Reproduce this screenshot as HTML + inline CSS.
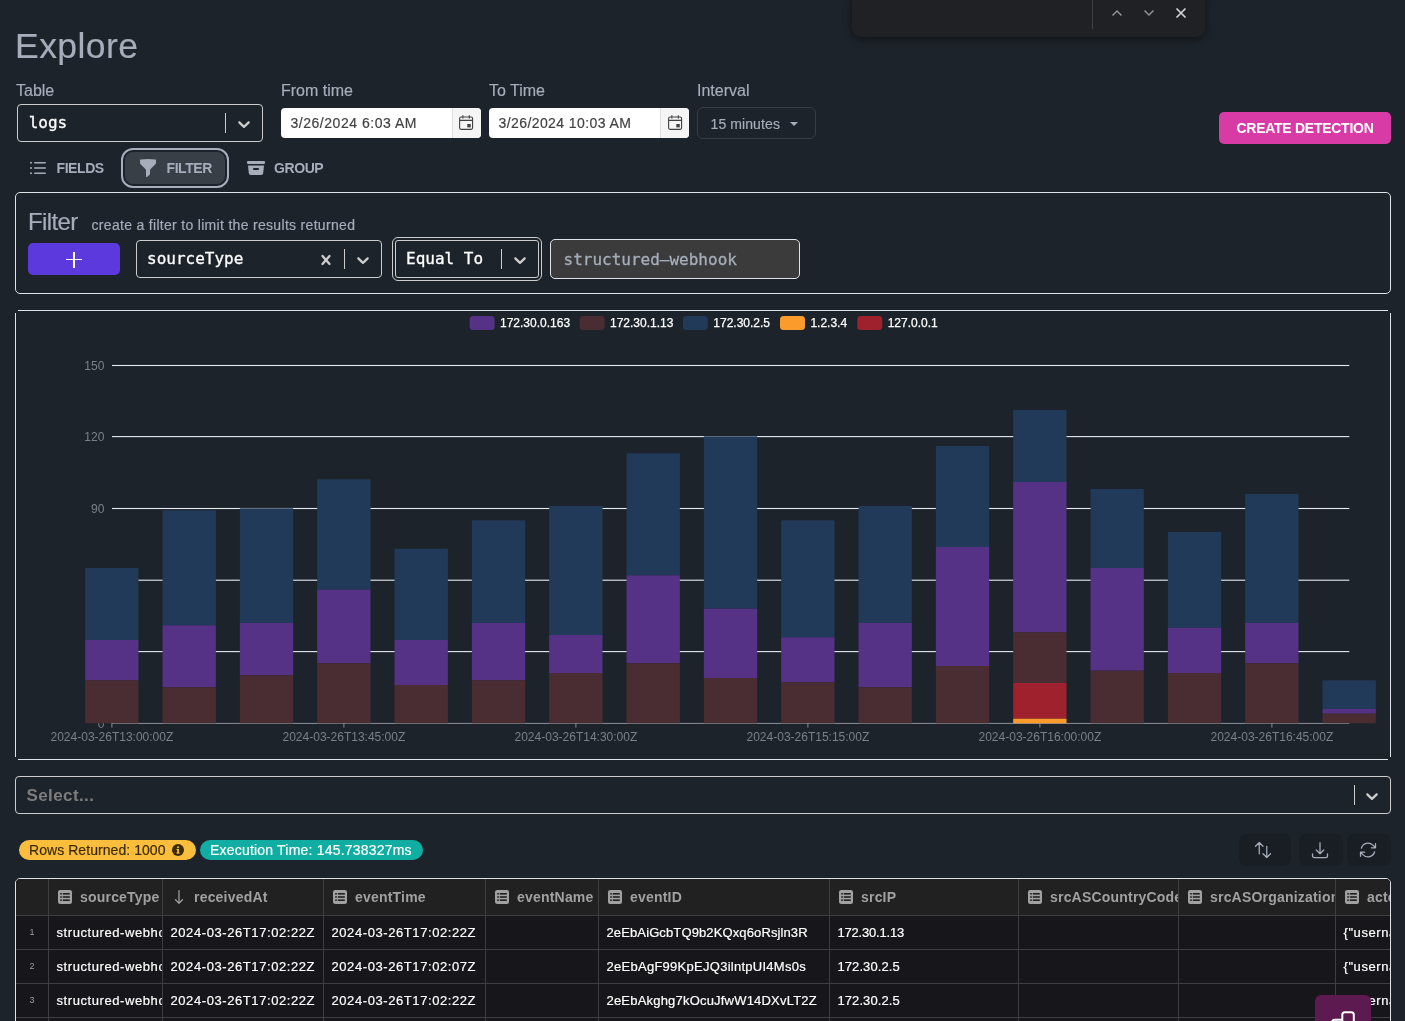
<!DOCTYPE html>
<html lang="en">
<head>
<meta charset="utf-8">
<title>Explore</title>
<style>
*{box-sizing:border-box}
html,body{margin:0;padding:0}
body{width:1405px;height:1021px;overflow:hidden;position:relative;background:#1d232a;color:#a6adbb;font-family:"Liberation Sans",Arial,sans-serif;font-size:16px;line-height:1}
.abs{position:absolute}
.lbl,h1,.fp .t,.fp .s,.badge span,.ddb span,.dt .v{-webkit-text-stroke:.18px currentColor}
.mono{font-family:"DejaVu Sans Mono","Liberation Mono",monospace;-webkit-text-stroke:.3px currentColor}
/* find bar */
.find{left:852px;top:-4px;width:353px;height:40.5px;background:#202124;border-radius:0 0 9px 9px;box-shadow:0 2px 9px rgba(0,0,0,.45)}
.find .sep{position:absolute;left:240px;top:0;width:1px;height:32.5px;background:#3f4145}
.find svg{position:absolute}
h1{margin:0;font-weight:400;font-size:35.5px;left:15px;top:25.9px;line-height:40px;white-space:nowrap;letter-spacing:.45px}
.lbl{font-size:16px;line-height:20px;top:80.5px;white-space:nowrap}
/* react-select look */
.rs{border:1px solid #cdcdcd;border-radius:4px;background:#1d232a;color:#fff}
.rs .val{position:absolute;left:10px;top:0;line-height:36px;font-size:16px;white-space:nowrap}
.rs .sep{position:absolute;top:8px;bottom:8px;width:1px;background:#cdcdcd}
.rs svg{position:absolute}
/* kendo date */
.dt{top:108px;width:200px;height:30px;background:#fff;border-radius:4px;overflow:hidden;color:#424242;font-size:14px}
.dt .v{position:absolute;left:9.5px;top:0;line-height:30.5px;white-space:nowrap;letter-spacing:.41px}
.dt .b{position:absolute;right:0;top:0;width:29px;height:30px;background:#f5f5f5;border-left:1px solid #dedede}
.dt .b svg{position:absolute;left:5px;top:5.6px;width:16.2px;height:17px}
.ddb{left:697px;top:107px;width:119px;height:32px;border:1px solid #363d46;border-radius:6px;font-size:14px;color:#a6adbb}
.ddb span{position:absolute;left:12.5px;top:0;line-height:33px;white-space:nowrap;letter-spacing:.1px}
.ddb i{position:absolute;left:92.3px;top:14px;width:0;height:0;border-left:4px solid transparent;border-right:4px solid transparent;border-top:4.5px solid #a6adbb}
.cd{left:1219px;top:112px;width:172px;height:32px;border-radius:5px;background:#d83ba6;color:#fff;font-weight:700;font-size:14px;line-height:32px;text-align:center;white-space:nowrap;letter-spacing:-.27px}
/* tabs */
.tab{top:152px;height:32px;border-radius:8px;font-weight:700;font-size:14px;line-height:32px;color:#a6adbb;white-space:nowrap;letter-spacing:-.42px}
.tab svg{position:absolute}
.tab span{position:absolute;top:0}
.tab.on{background:#383f47;outline:2px solid #a6adbb;outline-offset:2px}
/* panels */
.panel{border:1px solid #dfe2e7;border-radius:5px}
.fp{left:15px;top:192px;width:1376px;height:102px}
.fp .t{position:absolute;left:12px;top:13px;font-size:24px;line-height:32px;letter-spacing:-.6px;white-space:nowrap}
.fp .s{position:absolute;left:75.5px;top:22px;font-size:14px;line-height:20px;white-space:nowrap;letter-spacing:.31px}
.plus{left:28px;top:243px;width:92px;height:32px;border-radius:5px;background:#5b39dc}
.plus:before,.plus:after{content:"";position:absolute;background:#fff}
.plus:before{left:38px;top:16px;width:16px;height:1.3px}
.plus:after{left:45.4px;top:8.6px;width:1.3px;height:16px}
.inp{left:550px;top:239px;width:250px;height:40px;border:1px solid #dfe2e7;border-radius:5px;background:#3b3b3b;color:#a6adbb;font-size:16px;line-height:39.5px;padding-left:12.5px;white-space:nowrap}
.cp{left:15px;top:310px;width:1376px;height:450px;border:0}
.cp .ln{position:absolute;background:#dfe2e7}
.cp .chart{position:absolute;left:1px;top:1px}
.sel2{left:15px;top:776px;width:1376px;height:38px}
.sel2 .ph{position:absolute;left:10.5px;top:0;line-height:38px;font-size:17px;font-weight:700;color:#7d7d7d;white-space:nowrap;letter-spacing:.4px}
.badge{top:840px;height:20px;border-radius:10px;font-size:14px;line-height:20px;white-space:nowrap}
.b1{left:19px;width:177px;background:#fbbd3c;color:#3a2a06}
.b1 span{position:absolute;left:10px;top:0;letter-spacing:.06px}
.b1 svg{position:absolute;left:153px;top:4px}
.b2{left:200px;width:223px;background:#10ada3;color:#fff}
.b2 span{position:absolute;left:10px;top:0;letter-spacing:.2px}
.ib{top:834px;height:32px;border-radius:8px;background:#191e24}
.ib svg{position:absolute;top:6px}
/* grid */
.gw{left:15px;top:878px;width:1376px;height:160px;border:1px solid #dfe2e7;border-radius:5px;overflow:hidden;background:#16161b}
.grid{position:absolute;left:0;top:0;width:1374px;height:200px;font-size:13px}
.hc{position:absolute;top:0;height:37px;background:#212121;border-right:1px solid #3e3e42;border-bottom:1px solid #3e3e42;overflow:hidden;color:#a1a1a1;font-weight:700;font-size:14px;white-space:nowrap}
.hc .hic{position:absolute;left:8px;top:10px}
.hc .har{position:absolute;left:11px;top:10px}
.hc .ht{position:absolute;top:0;line-height:37px;letter-spacing:.2px}
.rc{position:absolute;height:34px;border-right:1px solid #3e3e42;border-bottom:1px solid #3e3e42;overflow:hidden;color:#fff;white-space:nowrap;background:#16161b}
.rc span{position:absolute;left:7.5px;top:0;line-height:33px;letter-spacing:.58px;-webkit-text-stroke:.2px currentColor}
.rc.num{color:#9d9da1;font-size:9px;text-align:center}
.rc.num span{position:static;line-height:33px;letter-spacing:0;-webkit-text-stroke:0}
.pw{left:1315px;top:995px;width:56px;height:40px;border-radius:6px 6px 0 0;background:#5d1a50}
</style>
</head>
<body>
<div id="root" style="position:absolute;left:0;top:0;width:1405px;height:1021px;will-change:transform">

<!-- browser find bar -->
<div class="abs find">
  <div class="sep"></div>
  <svg style="left:258px;top:12px" width="14" height="10" viewBox="0 0 14 10"><path d="M2.5 7.5 7 3l4.5 4.5" fill="none" stroke="#8e9196" stroke-width="1.5"/></svg>
  <svg style="left:290px;top:12px" width="14" height="10" viewBox="0 0 14 10"><path d="M2.5 2.5 7 7l4.5-4.5" fill="none" stroke="#8e9196" stroke-width="1.5"/></svg>
  <svg style="left:323px;top:11px" width="12" height="12" viewBox="0 0 12 12"><path d="M1.5 1.5l9 9M10.5 1.5l-9 9" fill="none" stroke="#d0d2d6" stroke-width="1.7"/></svg>
</div>

<h1 class="abs">Explore</h1>

<div class="abs lbl" style="left:16px">Table</div>
<div class="abs lbl" style="left:281px">From time</div>
<div class="abs lbl" style="left:489px">To Time</div>
<div class="abs lbl" style="left:697px">Interval</div>

<div class="abs rs" style="left:17px;top:104px;width:246px;height:38px">
  <div class="val mono" style="left:10.700px">logs</div>
  <div class="sep" style="left:206.5px"></div>
  <svg style="left:216px;top:9px" width="20" height="20" viewBox="0 0 20 20"><path d="M4.516 7.548c.436-.446 1.043-.481 1.576 0L10 11.295l3.908-3.747c.533-.481 1.141-.446 1.574 0 .436.445.408 1.197 0 1.615-.406.418-4.695 4.502-4.695 4.502a1.095 1.095 0 0 1-1.576 0S4.924 9.581 4.516 9.163c-.409-.418-.436-1.170 0-1.615z" fill="#cdcdcd"/></svg>
</div>

<div class="abs dt" style="left:281px"><div class="v" style="letter-spacing:.53px">3/26/2024 6:03 AM</div><div class="b"><svg width="16" height="16" viewBox="0 0 16 16" preserveAspectRatio="none"><rect x="1.6" y="2.8" width="12.8" height="11.6" rx="1.4" fill="none" stroke="#424242" stroke-width="1.1"/><path d="M1.6 6h12.800M4.800 1.200v3M11.200 1.200v3" stroke="#424242" stroke-width="1.1" fill="none"/><rect x="9.200" y="9.400" width="3.400" height="3.200" fill="#424242"/></svg></div></div>
<div class="abs dt" style="left:489px"><div class="v">3/26/2024 10:03 AM</div><div class="b"><svg style="left:6px" width="16" height="16" viewBox="0 0 16 16" preserveAspectRatio="none"><rect x="1.6" y="2.8" width="12.8" height="11.6" rx="1.4" fill="none" stroke="#424242" stroke-width="1.1"/><path d="M1.6 6h12.800M4.800 1.200v3M11.200 1.200v3" stroke="#424242" stroke-width="1.1" fill="none"/><rect x="9.200" y="9.400" width="3.400" height="3.200" fill="#424242"/></svg></div></div>

<div class="abs ddb"><span>15 minutes</span><i></i></div>

<div class="abs cd">CREATE DETECTION</div>

<!-- tabs -->
<div class="abs tab" style="left:18px;width:98px">
  <svg style="left:9.800px;top:6.100px" width="20" height="20" viewBox="0 0 20 20"><path fill="#a6adbb" d="M6 4.750A.75.750 0 016.750 4h10.500a.75.750 0 010 1.500H6.750A.75.750 0 016 4.750zM6 10a.75.750 0 01.75-.750h10.500a.75.750 0 010 1.500H6.750A.75.750 0 016 10zm0 5.250a.75.750 0 01.75-.750h10.500a.75.750 0 010 1.500H6.750a.75.750 0 01-.75-.750zM1.990 4.750a1 1 0 011-1H3a1 1 0 011 1v.010a1 1 0 01-1 1h-.010a1 1 0 01-1-1v-.010zM1.990 15.250a1 1 0 011-1H3a1 1 0 011 1v.010a1 1 0 01-1 1h-.010a1 1 0 01-1-1v-.010zM1.990 10a1 1 0 011-1H3a1 1 0 011 1v.010a1 1 0 01-1 1h-.010a1 1 0 01-1-1V10z"/></svg>
  <span style="left:38.500px">FIELDS</span>
</div>
<div class="abs tab on" style="left:125px;width:100px">
  <svg style="left:12.800px;top:5.900px" width="20" height="20" viewBox="0 0 20 20"><path fill="#a6adbb" fill-rule="evenodd" d="M2.628 1.601C5.028 1.206 7.490 1 10 1s4.973.206 7.372.601a.75.750 0 01.628.740v2.288a2.250 2.250 0 01-.659 1.590l-4.682 4.683a2.250 2.250 0 00-.659 1.590v3.037c0 .684-.310 1.330-.844 1.757l-1.937 1.550A.75.750 0 018 18.250v-5.757a2.250 2.250 0 00-.659-1.591L2.659 6.220A2.250 2.250 0 012 4.629V2.340a.75.750 0 01.628-.740z"/></svg>
  <span style="left:41.500px">FILTER</span>
</div>
<div class="abs tab" style="left:234px;width:101px">
  <svg style="left:12.200px;top:6px" width="20" height="20" viewBox="0 0 20 20"><path fill="#a6adbb" d="M2 3a1 1 0 00-1 1v1a1 1 0 001 1h16a1 1 0 001-1V4a1 1 0 00-1-1H2z"/><path fill="#a6adbb" fill-rule="evenodd" d="M2 7.500h16l-.811 7.710a2 2 0 01-1.990 1.790H4.802a2 2 0 01-1.990-1.790L2 7.500zM7 11a1 1 0 011-1h4a1 1 0 110 2H8a1 1 0 01-1-1z"/></svg>
  <span style="left:40px">GROUP</span>
</div>

<!-- filter panel -->
<div class="abs panel fp">
  <div class="t">Filter</div>
  <div class="s">create a filter to limit the results returned</div>
</div>
<div class="abs plus"></div>
<div class="abs rs" style="left:136px;top:240px;width:246px;height:38px">
  <div class="val mono">sourceType</div>
  <svg style="left:179px;top:9px" width="20" height="20" viewBox="0 0 20 20"><path d="M14.348 14.849a1.200 1.200 0 0 1-1.697 0L10 11.819l-2.651 3.029a1.200 1.200 0 1 1-1.697-1.697l2.758-3.150-2.759-3.152a1.200 1.200 0 1 1 1.697-1.697L10 8.183l2.651-3.031a1.200 1.200 0 1 1 1.697 1.697l-2.758 3.152 2.758 3.150a1.200 1.200 0 0 1 0 1.698z" fill="#cdcdcd"/></svg>
  <div class="sep" style="left:206.500px"></div>
  <svg style="left:216px;top:9px" width="20" height="20" viewBox="0 0 20 20"><path d="M4.516 7.548c.436-.446 1.043-.481 1.576 0L10 11.295l3.908-3.747c.533-.481 1.141-.446 1.574 0 .436.445.408 1.197 0 1.615-.406.418-4.695 4.502-4.695 4.502a1.095 1.095 0 0 1-1.576 0S4.924 9.581 4.516 9.163c-.409-.418-.436-1.170 0-1.615z" fill="#cdcdcd"/></svg>
</div>
<div class="abs rs" style="left:395px;top:240px;width:144px;height:38px;outline:1px solid #cdcdcd;outline-offset:2px;border-radius:3px">
  <div class="val mono">Equal To</div>
  <div class="sep" style="left:104.500px"></div>
  <svg style="left:114px;top:9px" width="20" height="20" viewBox="0 0 20 20"><path d="M4.516 7.548c.436-.446 1.043-.481 1.576 0L10 11.295l3.908-3.747c.533-.481 1.141-.446 1.574 0 .436.445.408 1.197 0 1.615-.406.418-4.695 4.502-4.695 4.502a1.095 1.095 0 0 1-1.576 0S4.924 9.581 4.516 9.163c-.409-.418-.436-1.170 0-1.615z" fill="#cdcdcd"/></svg>
</div>
<div class="abs inp mono">structured&#8211;webhook</div>

<!-- chart panel -->
<div class="abs panel cp">
<div class="ln" style="left:3px;top:0;width:1370px;height:1px"></div><div class="ln" style="left:3px;top:449px;width:1370px;height:1px"></div><div class="ln" style="left:0;top:3px;width:1px;height:444px"></div><div class="ln" style="left:1375px;top:3px;width:1px;height:444px"></div>
<svg class="chart" width="1374" height="448" viewBox="0 0 1374 448" font-family="Liberation Sans, Arial, sans-serif">
<rect x="453.6" y="5" width="25" height="14" rx="3.5" fill="#553285"/>
<text x="484.0" y="16.2" font-size="12" fill="#ffffff" stroke="#ffffff" stroke-width="0.25">172.30.0.163</text>
<rect x="563.6" y="5" width="25" height="14" rx="3.5" fill="#4a2d33"/>
<text x="594.0" y="16.2" font-size="12" fill="#ffffff" stroke="#ffffff" stroke-width="0.25">172.30.1.13</text>
<rect x="666.9" y="5" width="25" height="14" rx="3.5" fill="#213a59"/>
<text x="697.3" y="16.2" font-size="12" fill="#ffffff" stroke="#ffffff" stroke-width="0.25">172.30.2.5</text>
<rect x="764" y="5" width="25" height="14" rx="3.5" fill="#fb9b2b"/>
<text x="794.4" y="16.2" font-size="12" fill="#ffffff" stroke="#ffffff" stroke-width="0.25">1.2.3.4</text>
<rect x="841.3" y="5" width="25" height="14" rx="3.5" fill="#9f212d"/>
<text x="871.7" y="16.2" font-size="12" fill="#ffffff" stroke="#ffffff" stroke-width="0.25">127.0.0.1</text>
<rect x="96" y="53.95" width="1237.3" height="1.1" fill="#e6eaf0"/>
<text x="88.4" y="58.8" font-size="12" fill="#7c8088" text-anchor="end">150</text>
<rect x="96" y="125.05" width="1237.3" height="1.1" fill="#e6eaf0"/>
<text x="88.4" y="129.9" font-size="12" fill="#7c8088" text-anchor="end">120</text>
<rect x="96" y="196.95" width="1237.3" height="1.1" fill="#e6eaf0"/>
<text x="88.4" y="201.8" font-size="12" fill="#7c8088" text-anchor="end">90</text>
<rect x="96" y="268.65" width="1237.3" height="1.1" fill="#e6eaf0"/>
<text x="88.4" y="273.5" font-size="12" fill="#7c8088" text-anchor="end">60</text>
<rect x="96" y="340.05" width="1237.3" height="1.1" fill="#e6eaf0"/>
<text x="88.4" y="344.9" font-size="12" fill="#7c8088" text-anchor="end">30</text>
<text x="88.4" y="416.7" font-size="12" fill="#7c8088" text-anchor="end">0</text>
<rect x="96" y="411.9" width="1237.3" height="1" fill="#8b9099"/>
<rect x="69.19" y="257" width="53.33" height="72" fill="#213a59"/>
<rect x="69.19" y="329" width="53.33" height="40.3" fill="#553285"/>
<rect x="69.19" y="369.3" width="53.33" height="43.0" fill="#4a2d33"/>
<rect x="146.52" y="199.3" width="53.33" height="115.0" fill="#213a59"/>
<rect x="146.52" y="314.3" width="53.33" height="62.0" fill="#553285"/>
<rect x="146.52" y="376.3" width="53.33" height="36.0" fill="#4a2d33"/>
<rect x="223.85" y="197.3" width="53.33" height="114.7" fill="#213a59"/>
<rect x="223.85" y="312" width="53.33" height="52.3" fill="#553285"/>
<rect x="223.85" y="364.3" width="53.33" height="48.0" fill="#4a2d33"/>
<rect x="301.18" y="168.3" width="53.33" height="110.4" fill="#213a59"/>
<rect x="301.18" y="278.7" width="53.33" height="73.6" fill="#553285"/>
<rect x="301.18" y="352.3" width="53.33" height="60.0" fill="#4a2d33"/>
<rect x="378.52" y="237.7" width="53.33" height="91.3" fill="#213a59"/>
<rect x="378.52" y="329" width="53.33" height="45" fill="#553285"/>
<rect x="378.52" y="374" width="53.33" height="38.3" fill="#4a2d33"/>
<rect x="455.85" y="209.3" width="53.33" height="102.7" fill="#213a59"/>
<rect x="455.85" y="312" width="53.33" height="57.3" fill="#553285"/>
<rect x="455.85" y="369.3" width="53.33" height="43.0" fill="#4a2d33"/>
<rect x="533.18" y="195" width="53.33" height="129" fill="#213a59"/>
<rect x="533.18" y="324" width="53.33" height="38" fill="#553285"/>
<rect x="533.18" y="362" width="53.33" height="50.3" fill="#4a2d33"/>
<rect x="610.52" y="142.3" width="53.33" height="122.0" fill="#213a59"/>
<rect x="610.52" y="264.3" width="53.33" height="88.0" fill="#553285"/>
<rect x="610.52" y="352.3" width="53.33" height="60.0" fill="#4a2d33"/>
<rect x="687.85" y="125.3" width="53.33" height="172.4" fill="#213a59"/>
<rect x="687.85" y="297.7" width="53.33" height="69.3" fill="#553285"/>
<rect x="687.85" y="367" width="53.33" height="45.3" fill="#4a2d33"/>
<rect x="765.18" y="209.3" width="53.33" height="117.0" fill="#213a59"/>
<rect x="765.18" y="326.3" width="53.33" height="45.0" fill="#553285"/>
<rect x="765.18" y="371.3" width="53.33" height="41.0" fill="#4a2d33"/>
<rect x="842.51" y="195" width="53.33" height="117" fill="#213a59"/>
<rect x="842.51" y="312" width="53.33" height="64.3" fill="#553285"/>
<rect x="842.51" y="376.3" width="53.33" height="36.0" fill="#4a2d33"/>
<rect x="919.85" y="135" width="53.33" height="101" fill="#213a59"/>
<rect x="919.85" y="236" width="53.33" height="119" fill="#553285"/>
<rect x="919.85" y="355" width="53.33" height="57.3" fill="#4a2d33"/>
<rect x="997.18" y="99" width="53.33" height="72" fill="#213a59"/>
<rect x="997.18" y="171" width="53.33" height="150.3" fill="#553285"/>
<rect x="997.18" y="321.3" width="53.33" height="50.7" fill="#4a2d33"/>
<rect x="997.18" y="372" width="53.33" height="35.7" fill="#9f212d"/>
<rect x="997.18" y="407.7" width="53.33" height="4.6" fill="#fb9b2b"/>
<rect x="1074.51" y="178" width="53.33" height="79" fill="#213a59"/>
<rect x="1074.51" y="257" width="53.33" height="102.7" fill="#553285"/>
<rect x="1074.51" y="359.7" width="53.33" height="52.6" fill="#4a2d33"/>
<rect x="1151.85" y="221" width="53.33" height="95.7" fill="#213a59"/>
<rect x="1151.85" y="316.7" width="53.33" height="45.3" fill="#553285"/>
<rect x="1151.85" y="362" width="53.33" height="50.3" fill="#4a2d33"/>
<rect x="1229.18" y="183" width="53.33" height="129" fill="#213a59"/>
<rect x="1229.18" y="312" width="53.33" height="40.3" fill="#553285"/>
<rect x="1229.18" y="352.3" width="53.33" height="60.0" fill="#4a2d33"/>
<rect x="1306.51" y="369.3" width="53.33" height="28.7" fill="#213a59"/>
<rect x="1306.51" y="398" width="53.33" height="4.7" fill="#553285"/>
<rect x="1306.51" y="402.7" width="53.33" height="9.6" fill="#4a2d33"/>
<rect x="95.4" y="411.9" width="1" height="4.6" fill="#8b9099"/>
<text x="95.9" y="430" font-size="12" fill="#7c8088" text-anchor="middle">2024-03-26T13:00:00Z</text>
<rect x="327.4" y="411.9" width="1" height="4.6" fill="#8b9099"/>
<text x="327.9" y="430" font-size="12" fill="#7c8088" text-anchor="middle">2024-03-26T13:45:00Z</text>
<rect x="559.4" y="411.9" width="1" height="4.6" fill="#8b9099"/>
<text x="559.9" y="430" font-size="12" fill="#7c8088" text-anchor="middle">2024-03-26T14:30:00Z</text>
<rect x="791.4" y="411.9" width="1" height="4.6" fill="#8b9099"/>
<text x="791.9" y="430" font-size="12" fill="#7c8088" text-anchor="middle">2024-03-26T15:15:00Z</text>
<rect x="1023.4" y="411.9" width="1" height="4.6" fill="#8b9099"/>
<text x="1023.9" y="430" font-size="12" fill="#7c8088" text-anchor="middle">2024-03-26T16:00:00Z</text>
<rect x="1255.4" y="411.9" width="1" height="4.6" fill="#8b9099"/>
<text x="1255.9" y="430" font-size="12" fill="#7c8088" text-anchor="middle">2024-03-26T16:45:00Z</text>
</svg>
</div>

<!-- bottom select -->
<div class="abs rs sel2">
  <div class="ph">Select...</div>
  <div class="sep" style="left:1337.500px"></div>
  <svg style="left:1346px;top:9px" width="20" height="20" viewBox="0 0 20 20"><path d="M4.516 7.548c.436-.446 1.043-.481 1.576 0L10 11.295l3.908-3.747c.533-.481 1.141-.446 1.574 0 .436.445.408 1.197 0 1.615-.406.418-4.695 4.502-4.695 4.502a1.095 1.095 0 0 1-1.576 0S4.924 9.581 4.516 9.163c-.409-.418-.436-1.170 0-1.615z" fill="#cdcdcd"/></svg>
</div>

<div class="abs badge b1"><span>Rows Returned: 1000</span><svg width="12" height="12" viewBox="0 0 12 12"><circle cx="6" cy="6" r="6" fill="#3a2a06"/><rect x="5.200" y="5" width="1.700" height="4.300" fill="#fbbd3c"/><rect x="4.500" y="5" width="2.400" height="1" fill="#fbbd3c"/><rect x="4.400" y="8.500" width="3.300" height="1" fill="#fbbd3c"/><circle cx="6" cy="3.200" r="1" fill="#fbbd3c"/></svg></div>
<div class="abs badge b2"><span>Execution Time: 145.738327ms</span></div>

<div class="abs ib" style="left:1239px;width:52px"><svg style="left:14.200px" width="20" height="20" viewBox="0 0 24 24" fill="none" stroke="#a6adbb" stroke-width="1.5" stroke-linecap="round" stroke-linejoin="round"><path d="M3 7.500L7.500 3m0 0L12 7.500M7.500 3v13.500m13.500 0L16.500 21m0 0L12 16.500m4.500 4.500V7.500"/></svg></div>
<div class="abs ib" style="left:1299px;width:44px"><svg style="left:10.900px" width="20" height="20" viewBox="0 0 24 24" fill="none" stroke="#a6adbb" stroke-width="1.5" stroke-linecap="round" stroke-linejoin="round"><path d="M3 16.500v2.250A2.250 2.250 0 005.250 21h13.500A2.250 2.250 0 0021 18.750V16.500M16.500 12L12 16.500m0 0L7.500 12m4.500 4.500V3"/></svg></div>
<div class="abs ib" style="left:1347px;width:44px"><svg style="left:10.800px" width="20" height="20" viewBox="0 0 24 24" fill="none" stroke="#a6adbb" stroke-width="1.5" stroke-linecap="round" stroke-linejoin="round"><path d="M16.023 9.348h4.992v-.001M2.985 19.644v-4.992m0 0h4.992m-4.993 0l3.181 3.183a8.250 8.250 0 0013.803-3.700M4.031 9.865a8.250 8.250 0 0113.803-3.700l3.181 3.182m0-4.991v4.990"/></svg></div>

<!-- data grid -->
<div class="abs gw">
<div class="grid">
<div class="hc" style="left:0px;width:33px"></div>
<div class="hc" style="left:33px;width:114px"><svg class="hic" width="16" height="16" viewBox="0 0 16 16"><rect x="1" y="1" width="14" height="14" rx="2.2" fill="#a1a1a1"/><g fill="#212121"><rect x="3.2" y="4" width="1.6" height="1.6"/><rect x="5.8" y="4" width="7" height="1.6"/><rect x="3.2" y="7.2" width="1.6" height="1.6"/><rect x="5.8" y="7.2" width="7" height="1.6"/><rect x="3.2" y="10.4" width="1.6" height="1.6"/><rect x="5.8" y="10.4" width="7" height="1.6"/></g></svg><span class="ht" style="left:31px">sourceType</span></div>
<div class="hc" style="left:147px;width:161px"><svg class="har" width="10" height="16" viewBox="0 0 10 16"><path d="M5 1.500v12.800M1.500 10.700 5 14.400l3.500-3.700" fill="none" stroke="#a1a1a1" stroke-width="1.250" stroke-linecap="round" stroke-linejoin="round"/></svg><span class="ht" style="left:31px">receivedAt</span></div>
<div class="hc" style="left:308px;width:162px"><svg class="hic" width="16" height="16" viewBox="0 0 16 16"><rect x="1" y="1" width="14" height="14" rx="2.2" fill="#a1a1a1"/><g fill="#212121"><rect x="3.2" y="4" width="1.6" height="1.6"/><rect x="5.8" y="4" width="7" height="1.6"/><rect x="3.2" y="7.2" width="1.6" height="1.6"/><rect x="5.8" y="7.2" width="7" height="1.6"/><rect x="3.2" y="10.4" width="1.6" height="1.6"/><rect x="5.8" y="10.4" width="7" height="1.6"/></g></svg><span class="ht" style="left:31px">eventTime</span></div>
<div class="hc" style="left:470px;width:113px"><svg class="hic" width="16" height="16" viewBox="0 0 16 16"><rect x="1" y="1" width="14" height="14" rx="2.2" fill="#a1a1a1"/><g fill="#212121"><rect x="3.2" y="4" width="1.6" height="1.6"/><rect x="5.8" y="4" width="7" height="1.6"/><rect x="3.2" y="7.2" width="1.6" height="1.6"/><rect x="5.8" y="7.2" width="7" height="1.6"/><rect x="3.2" y="10.4" width="1.6" height="1.6"/><rect x="5.8" y="10.4" width="7" height="1.6"/></g></svg><span class="ht" style="left:31px">eventName</span></div>
<div class="hc" style="left:583px;width:231px"><svg class="hic" width="16" height="16" viewBox="0 0 16 16"><rect x="1" y="1" width="14" height="14" rx="2.2" fill="#a1a1a1"/><g fill="#212121"><rect x="3.2" y="4" width="1.6" height="1.6"/><rect x="5.8" y="4" width="7" height="1.6"/><rect x="3.2" y="7.2" width="1.6" height="1.6"/><rect x="5.8" y="7.2" width="7" height="1.6"/><rect x="3.2" y="10.4" width="1.6" height="1.6"/><rect x="5.8" y="10.4" width="7" height="1.6"/></g></svg><span class="ht" style="left:31px">eventID</span></div>
<div class="hc" style="left:814px;width:189px"><svg class="hic" width="16" height="16" viewBox="0 0 16 16"><rect x="1" y="1" width="14" height="14" rx="2.2" fill="#a1a1a1"/><g fill="#212121"><rect x="3.2" y="4" width="1.6" height="1.6"/><rect x="5.8" y="4" width="7" height="1.6"/><rect x="3.2" y="7.2" width="1.6" height="1.6"/><rect x="5.8" y="7.2" width="7" height="1.6"/><rect x="3.2" y="10.4" width="1.6" height="1.6"/><rect x="5.8" y="10.4" width="7" height="1.6"/></g></svg><span class="ht" style="left:31px">srcIP</span></div>
<div class="hc" style="left:1003px;width:160px"><svg class="hic" width="16" height="16" viewBox="0 0 16 16"><rect x="1" y="1" width="14" height="14" rx="2.2" fill="#a1a1a1"/><g fill="#212121"><rect x="3.2" y="4" width="1.6" height="1.6"/><rect x="5.8" y="4" width="7" height="1.6"/><rect x="3.2" y="7.2" width="1.6" height="1.6"/><rect x="5.8" y="7.2" width="7" height="1.6"/><rect x="3.2" y="10.4" width="1.6" height="1.6"/><rect x="5.8" y="10.4" width="7" height="1.6"/></g></svg><span class="ht" style="left:31px">srcASCountryCode</span></div>
<div class="hc" style="left:1163px;width:157px"><svg class="hic" width="16" height="16" viewBox="0 0 16 16"><rect x="1" y="1" width="14" height="14" rx="2.2" fill="#a1a1a1"/><g fill="#212121"><rect x="3.2" y="4" width="1.6" height="1.6"/><rect x="5.8" y="4" width="7" height="1.6"/><rect x="3.2" y="7.2" width="1.6" height="1.6"/><rect x="5.8" y="7.2" width="7" height="1.6"/><rect x="3.2" y="10.4" width="1.6" height="1.6"/><rect x="5.8" y="10.4" width="7" height="1.6"/></g></svg><span class="ht" style="left:31px">srcASOrganization</span></div>
<div class="hc" style="left:1320px;width:55px"><svg class="hic" width="16" height="16" viewBox="0 0 16 16"><rect x="1" y="1" width="14" height="14" rx="2.2" fill="#a1a1a1"/><g fill="#212121"><rect x="3.2" y="4" width="1.6" height="1.6"/><rect x="5.8" y="4" width="7" height="1.6"/><rect x="3.2" y="7.2" width="1.6" height="1.6"/><rect x="5.8" y="7.2" width="7" height="1.6"/><rect x="3.2" y="10.4" width="1.6" height="1.6"/><rect x="5.8" y="10.4" width="7" height="1.6"/></g></svg><span class="ht" style="left:31px">actor</span></div>
<div class="rc num" style="left:0px;top:37px;width:33px"><span>1</span></div>
<div class="rc" style="left:33px;top:37px;width:114px"><span>structured-webhook</span></div>
<div class="rc" style="left:147px;top:37px;width:161px"><span>2024-03-26T17:02:22Z</span></div>
<div class="rc" style="left:308px;top:37px;width:162px"><span>2024-03-26T17:02:22Z</span></div>
<div class="rc" style="left:470px;top:37px;width:113px"><span></span></div>
<div class="rc" style="left:583px;top:37px;width:231px"><span style="letter-spacing:.12px">2eEbAiGcbTQ9b2KQxq6oRsjln3R</span></div>
<div class="rc" style="left:814px;top:37px;width:189px"><span style="letter-spacing:-.19px">172.30.1.13</span></div>
<div class="rc" style="left:1003px;top:37px;width:160px"><span></span></div>
<div class="rc" style="left:1163px;top:37px;width:157px"><span></span></div>
<div class="rc" style="left:1320px;top:37px;width:55px"><span>{"username":"admin"}</span></div>
<div class="rc num" style="left:0px;top:71px;width:33px"><span>2</span></div>
<div class="rc" style="left:33px;top:71px;width:114px"><span>structured-webhook</span></div>
<div class="rc" style="left:147px;top:71px;width:161px"><span>2024-03-26T17:02:22Z</span></div>
<div class="rc" style="left:308px;top:71px;width:162px"><span>2024-03-26T17:02:07Z</span></div>
<div class="rc" style="left:470px;top:71px;width:113px"><span></span></div>
<div class="rc" style="left:583px;top:71px;width:231px"><span style="letter-spacing:.27px">2eEbAgF99KpEJQ3ilntpUI4Ms0s</span></div>
<div class="rc" style="left:814px;top:71px;width:189px"><span style="letter-spacing:.08px">172.30.2.5</span></div>
<div class="rc" style="left:1003px;top:71px;width:160px"><span></span></div>
<div class="rc" style="left:1163px;top:71px;width:157px"><span></span></div>
<div class="rc" style="left:1320px;top:71px;width:55px"><span>{"username":"admin"}</span></div>
<div class="rc num" style="left:0px;top:105px;width:33px"><span>3</span></div>
<div class="rc" style="left:33px;top:105px;width:114px"><span>structured-webhook</span></div>
<div class="rc" style="left:147px;top:105px;width:161px"><span>2024-03-26T17:02:22Z</span></div>
<div class="rc" style="left:308px;top:105px;width:162px"><span>2024-03-26T17:02:22Z</span></div>
<div class="rc" style="left:470px;top:105px;width:113px"><span></span></div>
<div class="rc" style="left:583px;top:105px;width:231px"><span style="letter-spacing:.2px">2eEbAkghg7kOcuJfwW14DXvLT2Z</span></div>
<div class="rc" style="left:814px;top:105px;width:189px"><span style="letter-spacing:.08px">172.30.2.5</span></div>
<div class="rc" style="left:1003px;top:105px;width:160px"><span></span></div>
<div class="rc" style="left:1163px;top:105px;width:157px"><span></span></div>
<div class="rc" style="left:1320px;top:105px;width:55px"><span>{"username":"admin"}</span></div>
<div class="rc num" style="left:0px;top:139px;width:33px"><span>4</span></div>
<div class="rc" style="left:33px;top:139px;width:114px"><span>structured-webhook</span></div>
<div class="rc" style="left:147px;top:139px;width:161px"><span>2024-03-26T17:02:22Z</span></div>
<div class="rc" style="left:308px;top:139px;width:162px"><span>2024-03-26T17:02:22Z</span></div>
<div class="rc" style="left:470px;top:139px;width:113px"><span></span></div>
<div class="rc" style="left:583px;top:139px;width:231px"><span style="letter-spacing:.2px">2eEbAkghg7kOcuJfwW14DXvLT2Z</span></div>
<div class="rc" style="left:814px;top:139px;width:189px"><span style="letter-spacing:.08px">172.30.2.5</span></div>
<div class="rc" style="left:1003px;top:139px;width:160px"><span></span></div>
<div class="rc" style="left:1163px;top:139px;width:157px"><span></span></div>
<div class="rc" style="left:1320px;top:139px;width:55px"><span>{"username":"admin"}</span></div>
</div>
</div>

<div class="abs pw"><svg style="position:absolute;left:14px;top:15px" width="28" height="26" viewBox="0 0 28 26"><rect x="13.300" y="2.300" width="11.500" height="22" rx="2.500" fill="none" stroke="#fff" stroke-width="2"/><path d="M13 9.800H6a3 3 0 0 0-3 3V26" fill="none" stroke="#fff" stroke-width="2"/></svg></div>

</div>
</body>
</html>
